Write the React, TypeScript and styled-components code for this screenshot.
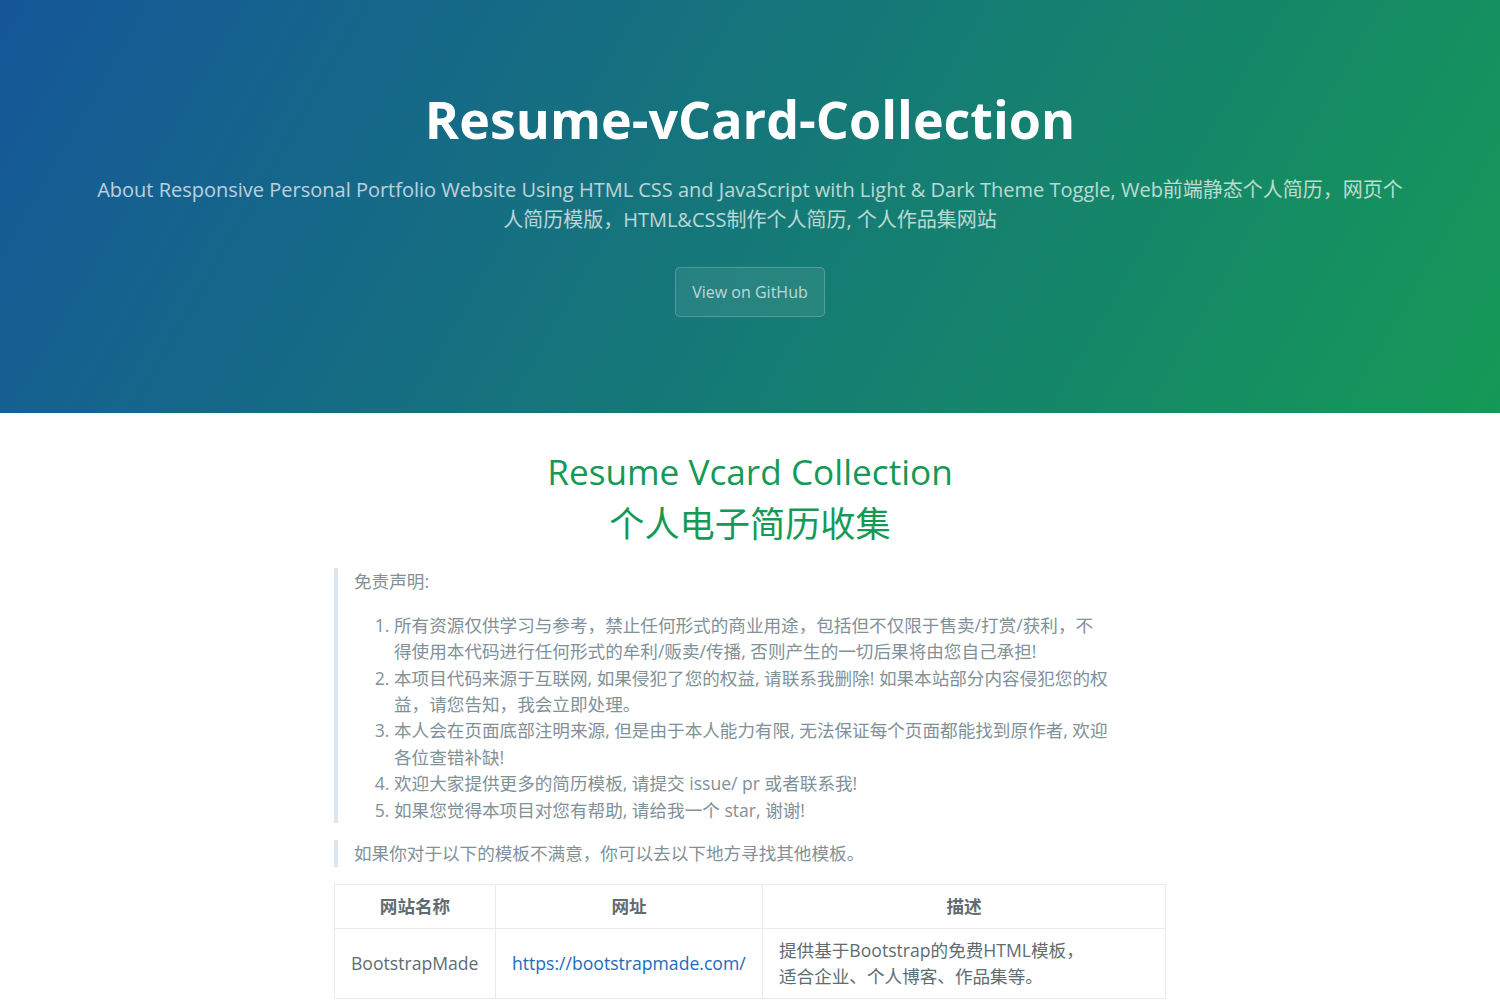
import React from "react";
import styled, { createGlobalStyle } from "styled-components";

const Global = createGlobalStyle`
  * { box-sizing: border-box; }
  html, body { margin: 0; padding: 0; }
  body {
    font-family: "Open Sans", "Noto Sans CJK SC", "Helvetica Neue", Arial, sans-serif;
    font-size: 16px;
    line-height: 1.5;
    color: #606c71;
    background: #fff;
  }
`;

const PageHeader = styled.header`
  color: #fff;
  text-align: center;
  background-color: #159957;
  background-image: linear-gradient(120deg, #155799, #159957);
  padding: 5rem 6rem;
`;

const ProjectName = styled.h1`
  margin: 0 0 0.1rem;
  font-size: 3.25rem;
  font-weight: 700;
  line-height: 1.5;
`;

const Tagline = styled.h2`
  margin: 16.6px 0 2rem;
  font-size: 1.25rem;
  font-weight: normal;
  line-height: 1.5;
  opacity: 0.7;
`;

const Btn = styled.a`
  display: inline-block;
  margin-bottom: 1rem;
  padding: 0.75rem 1rem;
  color: rgba(255, 255, 255, 0.7);
  background-color: rgba(255, 255, 255, 0.08);
  border: 1px solid rgba(255, 255, 255, 0.2);
  border-radius: 0.3rem;
  text-decoration: none;
  font-size: 16px;
  line-height: 1.5;
`;

const Main = styled.main`
  max-width: 64rem;
  margin: 0 auto;
  padding: 2rem 6rem;
  font-size: 1.1rem;
  word-wrap: break-word;
`;

const Title = styled.h1`
  margin: 0 0 1rem;
  font-size: 2em;
  font-weight: normal;
  line-height: 1.5;
  color: #159957;
  text-align: center;
`;

const Quote = styled.blockquote`
  margin: 1em 40px 1em 0;
  padding: 0 1rem;
  color: #819198;
  border-left: 0.3rem solid #dce6f0;
  & > :first-child { margin-top: 0; }
  & > :last-child { margin-bottom: 0; }
`;

const P = styled.p`
  margin: 1em 0;
`;

const List = styled.ol`
  margin: 1em 0;
  padding-left: 40px;
`;

const Table = styled.table`
  width: 100%;
  border-collapse: collapse;
  border-spacing: 0;
  word-break: keep-all;
  margin-top: 1em;
`;

const Th = styled.th<{ $w: number }>`
  width: ${(p) => p.$w}px;
  padding: 0.5rem 1rem;
  border: 1px solid #e9ebec;
  font-weight: bold;
  text-align: center;
`;

const Td = styled.td`
  padding: 0.5rem 1rem;
  border: 1px solid #e9ebec;
  vertical-align: middle;
`;

const Link = styled.a`
  color: #1e6bb8;
  text-decoration: none;
`;

const items = [
  "所有资源仅供学习与参考，禁止任何形式的商业用途，包括但不仅限于售卖/打赏/获利，不得使用本代码进行任何形式的牟利/贩卖/传播, 否则产生的一切后果将由您自己承担!",
  "本项目代码来源于互联网, 如果侵犯了您的权益, 请联系我删除! 如果本站部分内容侵犯您的权益，请您告知，我会立即处理。",
  "本人会在页面底部注明来源, 但是由于本人能力有限, 无法保证每个页面都能找到原作者, 欢迎各位查错补缺!",
  "欢迎大家提供更多的简历模板, 请提交 issue/ pr 或者联系我!",
  "如果您觉得本项目对您有帮助, 请给我一个 star, 谢谢!",
];

export default function App() {
  return (
    <>
      <Global />
      <PageHeader>
        <ProjectName>Resume-vCard-Collection</ProjectName>
        <Tagline>
          About Responsive Personal Portfolio Website Using HTML CSS and JavaScript with Light &amp; Dark Theme Toggle, Web前端静态个人简历，网页个人简历模版，HTML&amp;CSS制作个人简历, 个人作品集网站
        </Tagline>
        <Btn href="#">View on GitHub</Btn>
      </PageHeader>
      <Main>
        <Title>
          Resume Vcard Collection
          <br />
          个人电子简历收集
        </Title>
        <Quote>
          <P>免责声明:</P>
          <List>
            {items.map((t) => (
              <li key={t}>{t}</li>
            ))}
          </List>
        </Quote>
        <Quote>
          <P>如果你对于以下的模板不满意，你可以去以下地方寻找其他模板。</P>
        </Quote>
        <Table>
          <thead>
            <tr>
              <Th $w={161}>网站名称</Th>
              <Th $w={267}>网址</Th>
              <Th $w={404}>描述</Th>
            </tr>
          </thead>
          <tbody>
            <tr>
              <Td>BootstrapMade</Td>
              <Td>
                <Link href="#">https://bootstrapmade.com/</Link>
              </Td>
              <Td>
                提供基于Bootstrap的免费HTML模板，
                <br />
                适合企业、个人博客、作品集等。
              </Td>
            </tr>
          </tbody>
        </Table>
      </Main>
    </>
  );
}
